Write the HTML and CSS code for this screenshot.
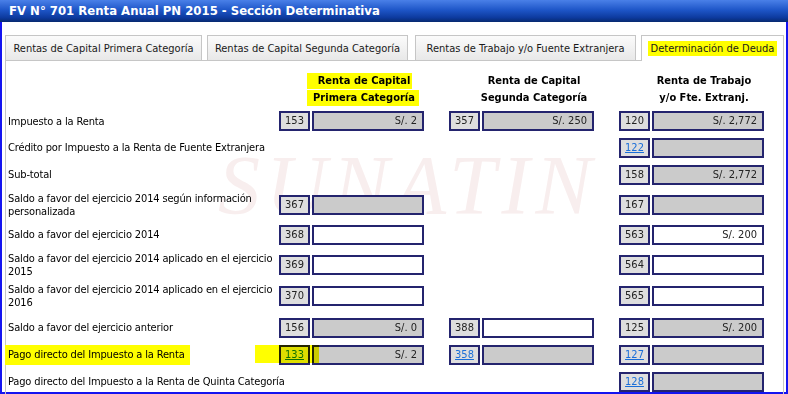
FILE: index.html
```html
<!DOCTYPE html>
<html lang="es">
<head>
  <meta charset="UTF-8">
  <title>FV N° 701 Renta Anual PN 2015</title>
  <link rel="stylesheet" href="styles.css">
</head>
<body>
<div class="titlebar">FV N° 701 Renta Anual PN 2015 - Sección Determinativa</div>
<div class="frame">
  <!--pestañas-->
  <div class="tabs">
    <div class="tab tab_1">Rentas de Capital Primera Categoría</div>
    <div class="tab tab_2">Rentas de Capital Segunda Categoría</div>
    <div class="tab tab_3">Rentas de Trabajo y/o Fuente Extranjera</div>
    <div class="tab tab_4"><span class="hl_tab">Determinación de Deuda</span></div>
  </div>
  <div class="panel">
    <div class="watermark">SUNATIN</div>
    <div class="grid">
      <!--cabecera-->
      <div></div>
      <div class="colhead">
        <span class="hl_head hl_a">Renta de Capital</span><br>
        <span class="hl_head hl_b">Primera Categoría</span>
      </div>
      <div class="colhead">Renta de Capital<br>Segunda Categoría</div>
      <div class="colhead">Renta de Trabajo<br>y/o Fte. Extranj.</div>

      <!--fila 1-->
      <div class="label">Impuesto a la Renta</div>
      <div class="field"><span class="code">153</span><span class="val grey">S/. 2</span></div>
      <div class="field"><span class="code">357</span><span class="val grey">S/. 250</span></div>
      <div class="field"><span class="code">120</span><span class="val grey">S/. 2,772</span></div>

      <!--fila 2-->
      <div class="label">Crédito por Impuesto a la Renta de Fuente Extranjera</div>
      <div></div>
      <div></div>
      <div class="field"><span class="code"><a href="#">122</a></span><span class="val grey"></span></div>

      <!--fila 3-->
      <div class="label">Sub-total</div>
      <div></div>
      <div></div>
      <div class="field"><span class="code">158</span><span class="val grey">S/. 2,772</span></div>

      <!--fila 4-->
      <div class="label">Saldo a favor del ejercicio 2014 según información<br>personalizada</div>
      <div class="field"><span class="code">367</span><span class="val grey"></span></div>
      <div></div>
      <div class="field"><span class="code">167</span><span class="val grey"></span></div>

      <!--fila 5-->
      <div class="label">Saldo a favor del ejercicio 2014</div>
      <div class="field"><span class="code">368</span><span class="val"></span></div>
      <div></div>
      <div class="field"><span class="code">563</span><span class="val">S/. 200</span></div>

      <!--fila 6-->
      <div class="label">Saldo a favor del ejercicio 2014 aplicado en el ejercicio<br>2015</div>
      <div class="field"><span class="code">369</span><span class="val"></span></div>
      <div></div>
      <div class="field"><span class="code">564</span><span class="val"></span></div>

      <!--fila 7-->
      <div class="label">Saldo a favor del ejercicio 2014 aplicado en el ejercicio<br>2016</div>
      <div class="field"><span class="code">370</span><span class="val"></span></div>
      <div></div>
      <div class="field"><span class="code">565</span><span class="val"></span></div>

      <!--fila 8-->
      <div class="label">Saldo a favor del ejercicio anterior</div>
      <div class="field"><span class="code">156</span><span class="val grey">S/. 0</span></div>
      <div class="field"><span class="code">388</span><span class="val"></span></div>
      <div class="field"><span class="code">125</span><span class="val grey">S/. 200</span></div>

      <!--fila 9-->
      <div class="label"><span class="hl_label">Pago directo del Impuesto a la Renta</span></div>
      <div class="field marked">
        <span class="code"><a href="#" class="green">133</a></span><span class="val grey">S/. 2</span>
        <span class="marker"></span>
      </div>
      <div class="field"><span class="code"><a href="#">358</a></span><span class="val grey"></span></div>
      <div class="field"><span class="code"><a href="#">127</a></span><span class="val grey"></span></div>

      <!--fila 10-->
      <div class="label">Pago directo del Impuesto a la Renta de Quinta Categoría</div>
      <div></div>
      <div></div>
      <div class="field"><span class="code"><a href="#">128</a></span><span class="val grey"></span></div>
    </div>
  </div>
</div>
</body>
</html>
```
FILE: styles.css
```css
*{
  margin: 0;
  padding: 0;
  box-sizing: border-box;
}
body{
  width: 788px;
  height: 394px;
  overflow: hidden;
  background: #fff;
  color: #000;
  font-family: "DejaVu Sans Condensed", "DejaVu Sans", sans-serif;
  font-stretch: condensed;
  font-size: 11px;
}
.titlebar{
  height: 22px;
  line-height: 22px;
  padding-left: 9px;
  color: #fff;
  font-weight: bold;
  font-size: 13px;
  background: linear-gradient(#4a80e8, #1e56c8 45%, #0d3a9e 80%, #072a70);
}
.frame{
  height: 372px;
  border: 2px solid #1414f0;
  border-top: none;
  padding-top: 13px;
}
/*pestañas*/
.tabs{
  display: flex;
  align-items: flex-start;
  padding-left: 3px;
  height: 25px;
}
.tab{
  height: 25px;
  border: 1px solid #c6c6c6;
  border-bottom: none;
  background: linear-gradient(#fbfbfb, #e8e8e8);
  display: flex;
  align-items: center;
  justify-content: center;
  color: #1a1a1a;
  white-space: nowrap;
}
.tab_1{
  width: 197px;
}
.tab_2{
  width: 201px;
  margin-left: 5px;
}
.tab_3{
  width: 221px;
  margin-left: 7px;
}
.tab_4{
  width: 143px;
  margin-left: 5px;
  height: 26px;
  background: #fff;
  position: relative;
  z-index: 2;
}
.hl_tab{
  background: #ffff00;
  padding: 0 3px;
  line-height: 15px;
  display: inline-block;
}
.panel{
  width: 779px;
  height: 334px;
  margin-left: 3px;
  border: 1px solid #c6c6c6;
  border-bottom: none;
  padding-left: 2px;
  position: relative;
}
/*marca de agua*/
.watermark{
  position: absolute;
  left: 212px;
  top: 83px;
  font-family: "Liberation Serif", serif;
  font-style: italic;
  font-stretch: normal;
  font-size: 84px;
  line-height: 84px;
  letter-spacing: 6px;
  color: #f8eeee;
}
.grid{
  position: relative;
  z-index: 1;
  display: grid;
  grid-template-columns: 246px 145px 145px 145px;
  grid-template-rows: 47px 26px 27px 27px 33px 27px 33px 30px 33px 21px 33px;
  column-gap: 25px;
}
.colhead{
  align-self: end;
  width: 170px;
  text-align: center;
  font-weight: bold;
  line-height: 17px;
  padding-bottom: 2px;
  white-space: nowrap;
}
.hl_head{
  display: inline-block;
  background: #ffff00;
  line-height: 16px;
}
.hl_a{
  padding: 0 2px 0 11px;
  margin-left: -9px;
}
.hl_b{
  padding: 0 4px 0 6px;
  margin-left: -2px;
}
.label{
  align-self: center;
  white-space: nowrap;
  line-height: 13px;
  letter-spacing: -0.15px;
}
.hl_label{
  background: #ffff00;
  padding: 3px 5px 4px 3px;
  margin-left: -3px;
}
.field{
  align-self: center;
  display: flex;
  gap: 2px;
}
.marked{
  position: relative;
}
.marker{
  position: absolute;
  left: -24px;
  top: 0;
  width: 64px;
  height: 18px;
  background: #ffff00;
  mix-blend-mode: multiply;
}
.code{
  width: 31px;
  height: 20px;
  border: 2px solid #24246e;
  background: #dedede;
  text-align: center;
  line-height: 16px;
  color: #222;
}
.code a{
  color: #1a6ed8;
  text-decoration: underline;
}
.code a.green{
  color: #107010;
}
.val{
  width: 112px;
  height: 20px;
  border: 2px solid #24246e;
  background: #fff;
  text-align: right;
  padding-right: 5px;
  line-height: 16px;
  color: #222;
}
.val.grey{
  background: #cbcbcb;
}
```
